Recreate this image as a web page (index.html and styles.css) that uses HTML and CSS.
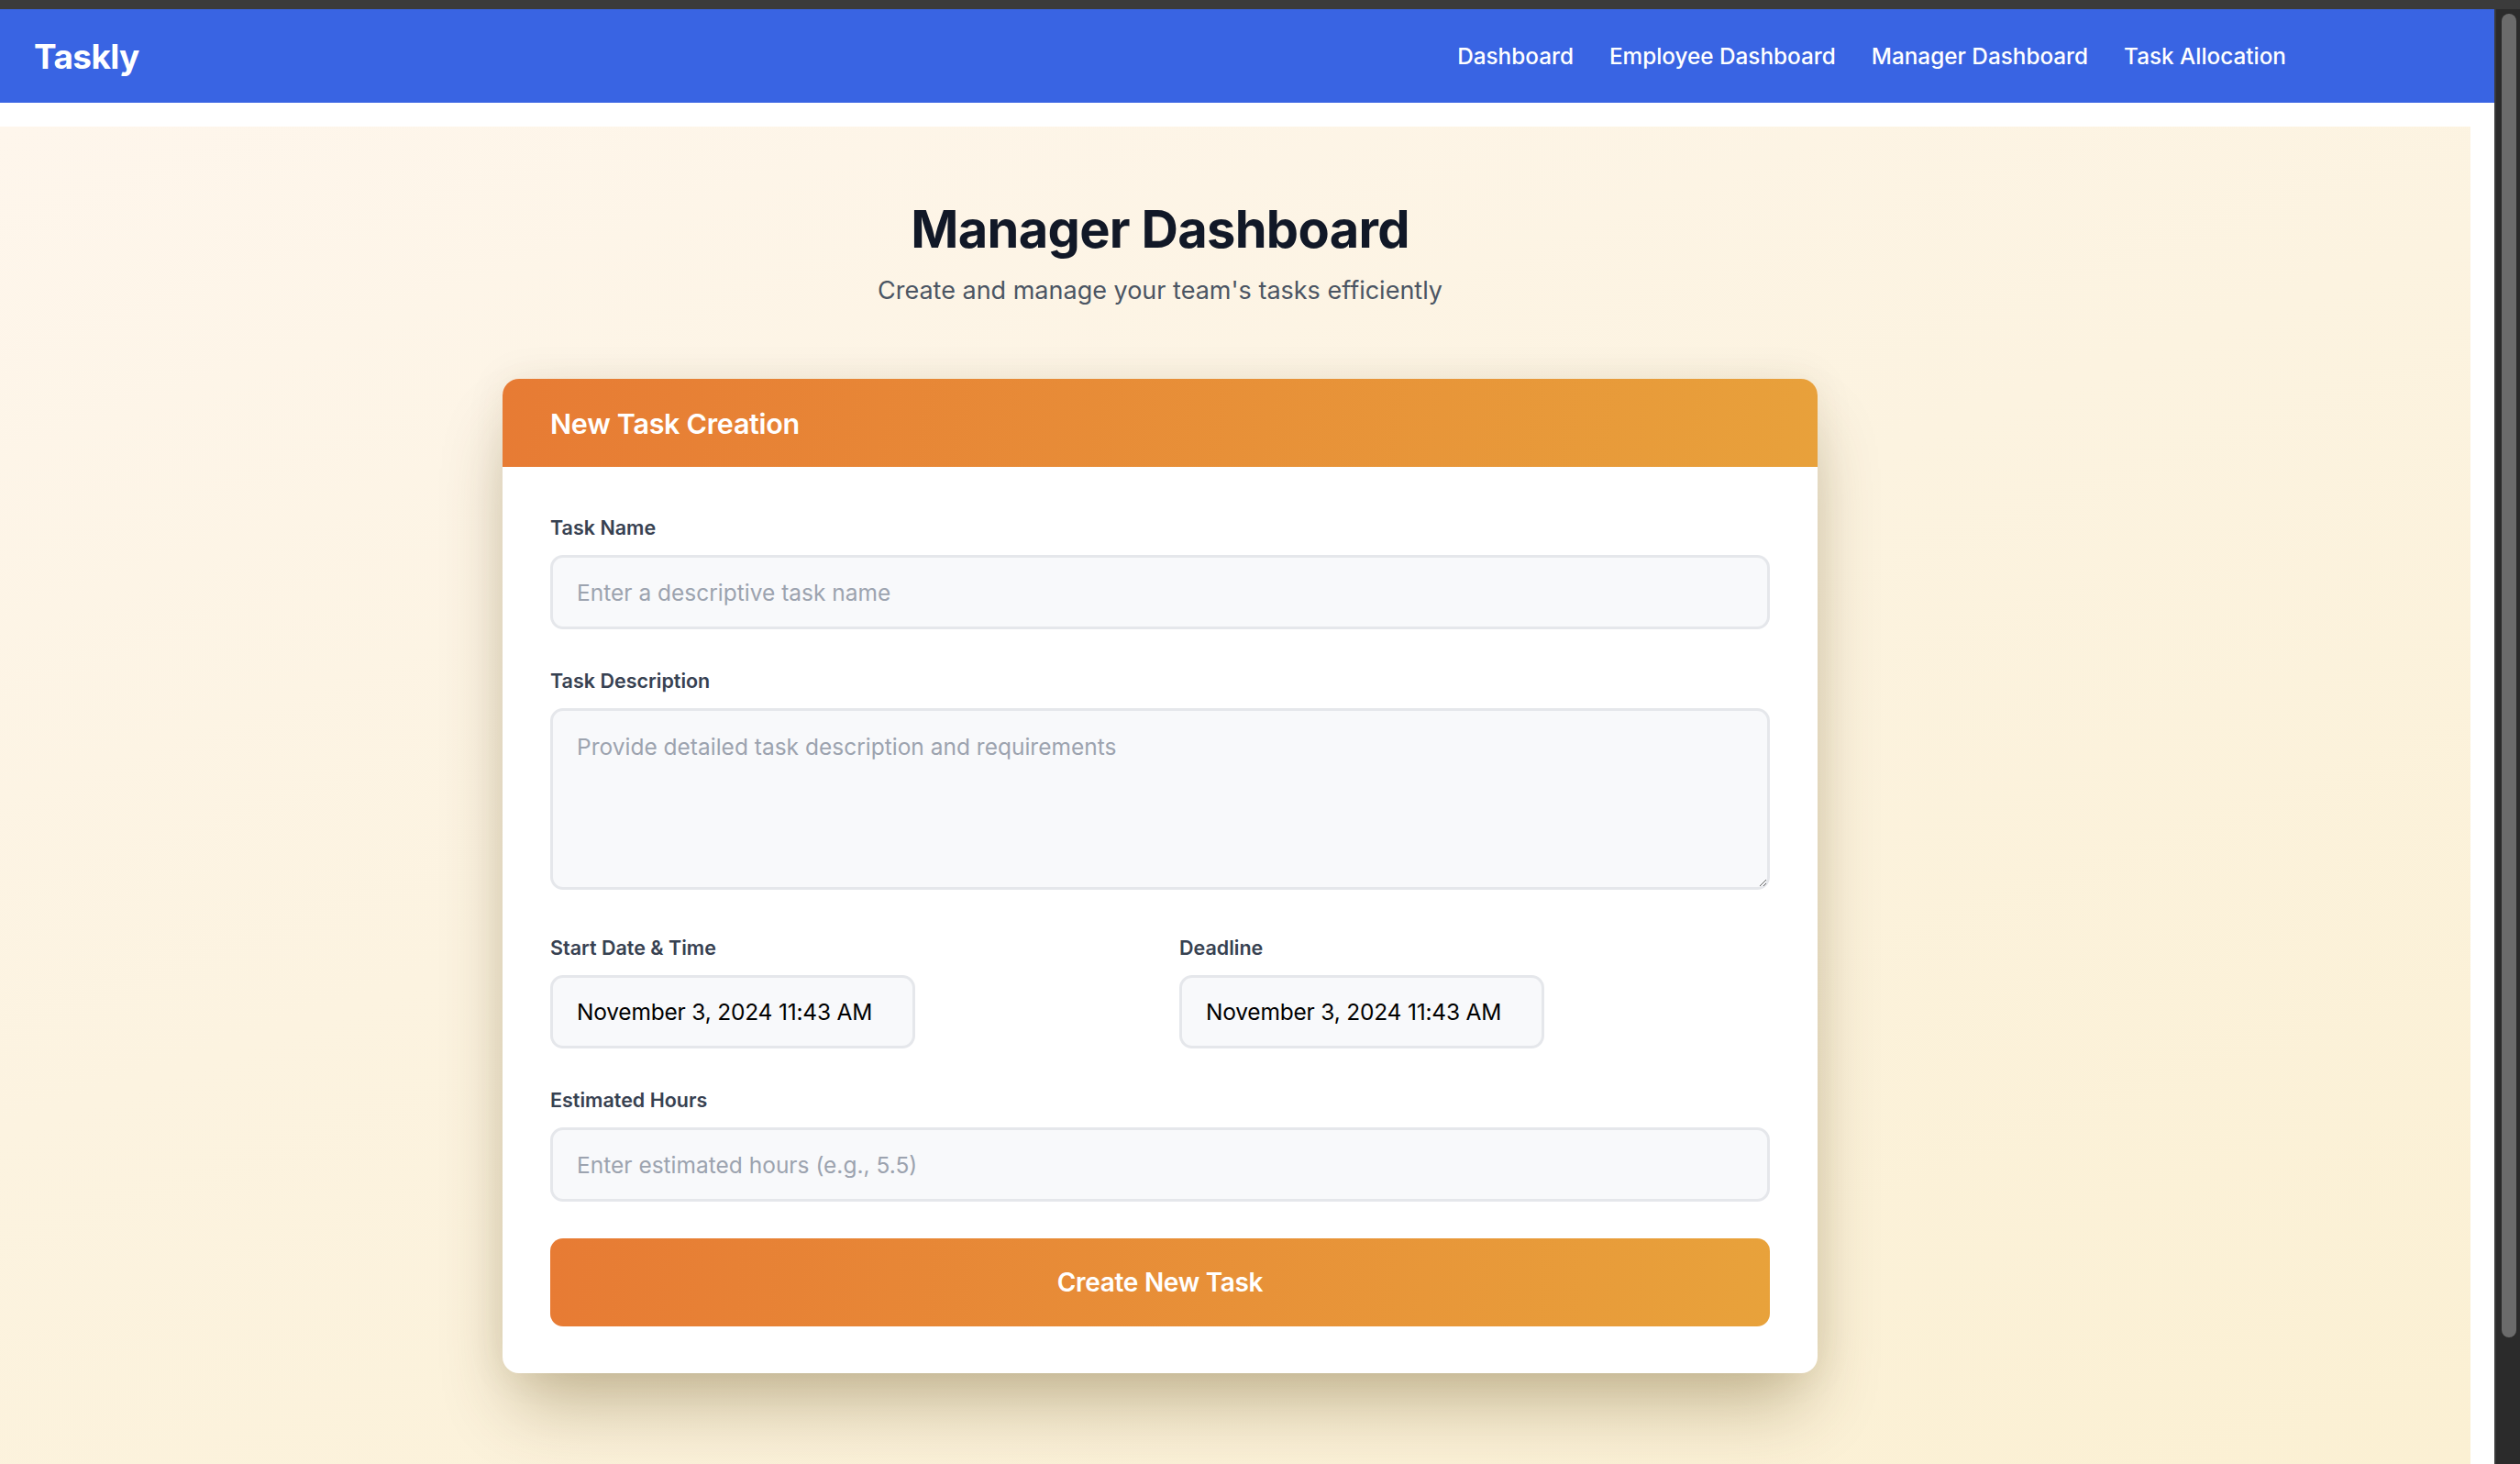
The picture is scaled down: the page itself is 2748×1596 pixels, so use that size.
FILE: index.html
```html
<!DOCTYPE html>
<html lang="en">
<head>
<meta charset="utf-8">
<title>Taskly - Manager Dashboard</title>
<link rel="stylesheet" href="styles.css">
</head>
<body>
<div class="chrome-top"></div>
<div class="window">
  <div class="app">
    <nav class="navbar">
      <div class="brand">Taskly</div>
      <div class="nav-links">
        <a class="nav-link" href="#">Dashboard</a>
        <a class="nav-link" href="#">Employee Dashboard</a>
        <a class="nav-link" href="#">Manager Dashboard</a>
        <a class="nav-link" href="#">Task Allocation</a>
      </div>
    </nav>
    <main class="main">
      <div class="content">
        <h1 class="page-title">Manager Dashboard</h1>
        <p class="page-subtitle">Create and manage your team's tasks efficiently</p>
        <section class="card">
          <div class="card-header">New Task Creation</div>
          <form class="card-body">
            <div class="field">
              <label class="field-label">Task Name</label>
              <input class="field-input" type="text" placeholder="Enter a descriptive task name">
            </div>
            <div class="field field-desc">
              <label class="field-label">Task Description</label>
              <textarea class="field-input field-textarea" placeholder="Provide detailed task description and requirements"></textarea>
            </div>
            <div class="field-row">
              <div class="field">
                <label class="field-label">Start Date &amp; Time</label>
                <input class="field-input field-date" type="text" value="November 3, 2024 11:43 AM">
              </div>
              <div class="field">
                <label class="field-label">Deadline</label>
                <input class="field-input field-date" type="text" value="November 3, 2024 11:43 AM">
              </div>
            </div>
            <div class="field">
              <label class="field-label">Estimated Hours</label>
              <input class="field-input" type="text" placeholder="Enter estimated hours (e.g., 5.5)">
            </div>
            <button class="submit-btn" type="button">Create New Task</button>
          </form>
        </section>
      </div>
    </main>
  </div>
  <div class="scrollbar"><div class="scroll-thumb"></div></div>
</div>
</body>
</html>
```

FILE: styles.css
```css
* {
  box-sizing: border-box;
}

html, body {
  margin: 0;
  padding: 0;
  height: 100%;
  overflow: hidden;
  background: #ffffff;
}

body {
  font-family: Inter, "Noto Sans", "Liberation Sans", sans-serif;
  display: flex;
  flex-direction: column;
}

.chrome-top {
  height: 10px;
  background: #3b3b3b;
  flex: none;
}

.window {
  flex: 1;
  display: flex;
  min-height: 0;
}

.app {
  flex: 1;
  display: flex;
  flex-direction: column;
  min-width: 0;
}

.navbar {
  height: 102px;
  flex: none;
  background: #3964e3;
  display: flex;
  align-items: center;
  justify-content: space-between;
  padding: 0 227px 0 37px;
}

.brand {
  color: #ffffff;
  font-size: 37px;
  font-weight: 700;
  letter-spacing: -0.6px;
}

.nav-links {
  display: flex;
  gap: 39px;
}

.nav-link {
  color: #ffffff;
  text-decoration: none;
  font-size: 24.3px;
  font-weight: 500;
}

.main {
  flex: 1;
  margin: 26px 26px 0 0;
  background: linear-gradient(160deg, #fef6ec 0%, #fcf3e0 45%, #fbf0d3 100%);
  padding-top: 79px;
}

.content {
  width: 1434px;
  margin-left: 548px;
  text-align: center;
}

.page-title {
  margin: 0;
  font-size: 56px;
  line-height: 67px;
  font-weight: 700;
  color: #111827;
  letter-spacing: -0.7px;
}

.page-subtitle {
  margin: 15px 0 0;
  font-size: 27px;
  line-height: 36px;
  color: #4b5563;
}

.card {
  margin-top: 78px;
  background: #ffffff;
  border-radius: 18px;
  overflow: hidden;
  text-align: left;
  box-shadow: 0 46px 80px -14px rgba(80, 60, 0, 0.32), 0 0 44px rgba(80, 60, 0, 0.08);
}

.card-header {
  height: 96px;
  display: flex;
  align-items: center;
  padding: 0 52px;
  background: linear-gradient(100deg, #e77b34 0%, #e8a13b 100%);
  color: #ffffff;
  font-size: 30.5px;
  font-weight: 600;
  letter-spacing: -0.3px;
}

.card-body {
  padding: 52px 52px 51px;
  display: flex;
  flex-direction: column;
  gap: 42px;
}

.field {
  display: flex;
  flex-direction: column;
  gap: 16px;
}

.field-desc {
  margin-bottom: 7px;
}

.field-label {
  font-size: 21.5px;
  line-height: 28px;
  font-weight: 600;
  color: #374151;
}

.field-input {
  display: block;
  width: 100%;
  height: 81px;
  margin: 0;
  padding: 0 20px 0 26px;
  border: 3px solid #e5e7eb;
  border-radius: 14px;
  background: #f8f9fb;
  font-family: inherit;
  font-size: 24.5px;
  color: #000000;
  outline: none;
}

.field-input::placeholder {
  color: #9ca3af;
}

.field-textarea {
  height: 198px;
  padding: 22px 26px;
  resize: vertical;
  line-height: 34px;
}

.field-row {
  display: grid;
  grid-template-columns: 1fr 1fr;
  gap: 42px;
}

.field-date {
  width: 398px;
  height: 80px;
  letter-spacing: -0.2px;
  padding-right: 8px;
}

.submit-btn {
  display: block;
  width: 100%;
  height: 96px;
  margin: -2px 0 0;
  border: none;
  border-radius: 14px;
  background: linear-gradient(95deg, #e77b34 0%, #e8a23b 100%);
  color: #ffffff;
  font-family: inherit;
  font-size: 28px;
  font-weight: 600;
  letter-spacing: -0.3px;
  cursor: pointer;
}

.scrollbar {
  width: 28px;
  flex: none;
  background: #2b2b2b;
  border-left: 2px solid #3a3a3a;
  padding: 5px 4px 0 6px;
}

.scroll-thumb {
  height: 1443px;
  border-radius: 8px;
  background: #6b6b6b;
}
```
